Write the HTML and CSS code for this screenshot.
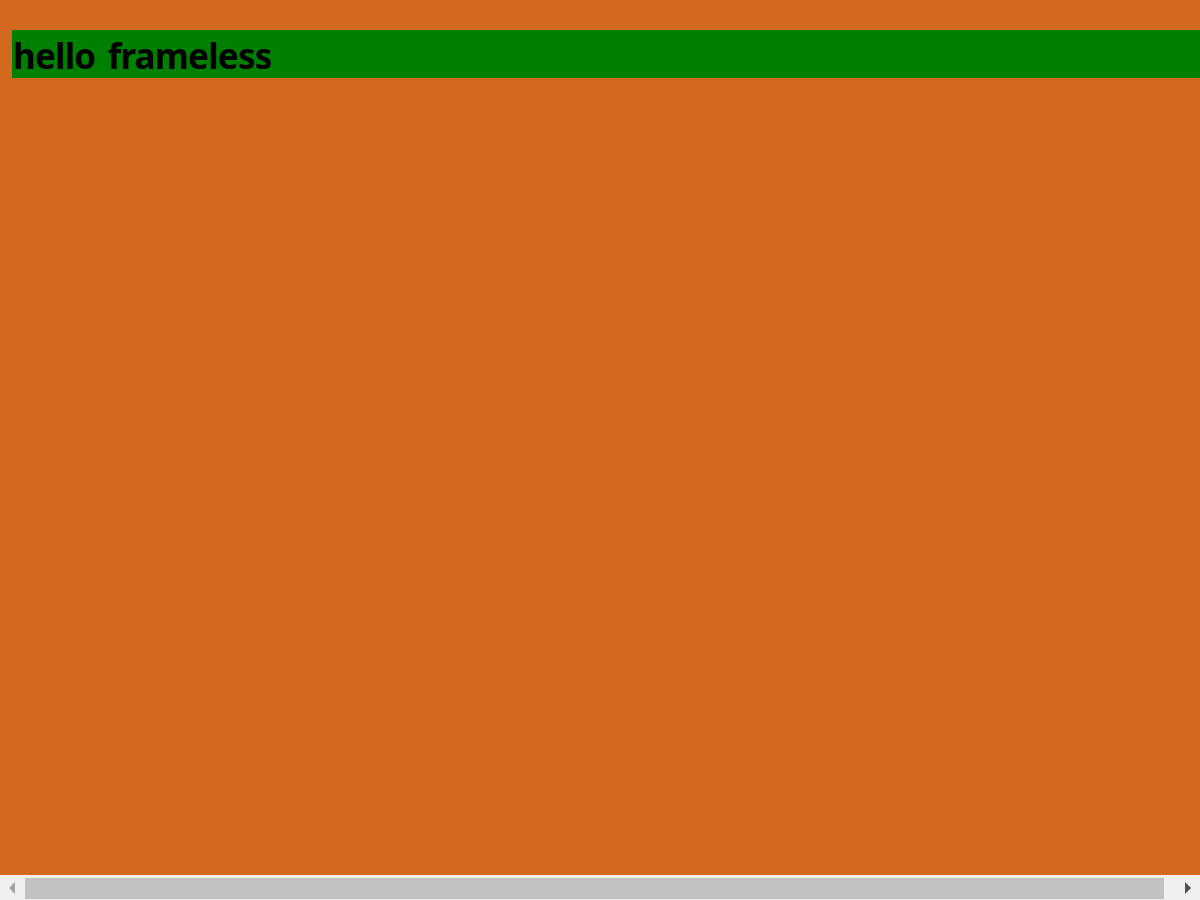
FILE: index.html
```html
<!DOCTYPE html>
<html>
<head>
<meta charset="utf-8">
<link rel="stylesheet" href="styles.css">
</head>
<body>
<h1 class="banner">hello frameless</h1>
<div class="hscroll">
  <div class="arrow arrow-left"></div>
  <div class="thumb"></div>
  <div class="arrow arrow-right"></div>
</div>
</body>
</html>
```
FILE: styles.css
```css
html, body {
  margin: 0;
  padding: 0;
  height: 100%;
  overflow: hidden;
  background: #d2691e;
}
body {
  padding: 30px 0 0 12px;
  box-sizing: border-box;
}
.banner {
  margin: 0;
  height: 48px;
  background: #008000;
  color: #000;
  font-family: "Noto Sans", "Open Sans", sans-serif;
  font-weight: 700;
  font-size: 35px;
  line-height: 52px;
  padding-left: 1px;
  letter-spacing: -0.8px;
  word-spacing: 4px;
  white-space: nowrap;
}
.hscroll {
  position: fixed;
  left: 0;
  right: 0;
  bottom: 0;
  height: 25px;
  background: #f0f0f0;
  display: flex;
  align-items: center;
  box-sizing: border-box;
  padding-top: 1px;
}
.thumb {
  height: 21px;
  width: 1139px;
  background: #c1c1c1;
  margin-left: 10px;
}
.arrow {
  width: 0;
  height: 0;
  border-top: 6px solid transparent;
  border-bottom: 6px solid transparent;
}
.arrow-left {
  margin-left: 9px;
  border-right: 6px solid #a3a3a3;
}
.arrow-right {
  margin-left: 21px;
  border-left: 6px solid #505050;
}
```
